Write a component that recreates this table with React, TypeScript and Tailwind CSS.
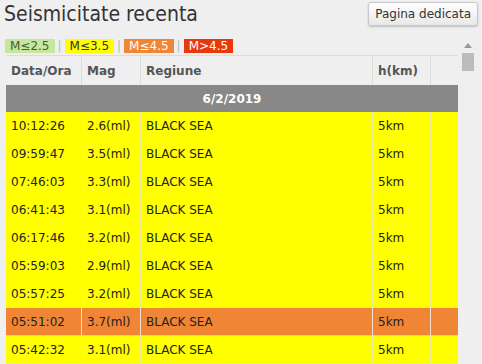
import React from "react";

const rows = [
  { t: "10:12:26", m: "2.6(ml)", c: "y" },
  { t: "09:59:47", m: "3.5(ml)", c: "y" },
  { t: "07:46:03", m: "3.3(ml)", c: "y" },
  { t: "06:41:43", m: "3.1(ml)", c: "y" },
  { t: "06:17:46", m: "3.2(ml)", c: "y" },
  { t: "05:59:03", m: "2.9(ml)", c: "y" },
  { t: "05:57:25", m: "3.2(ml)", c: "y" },
  { t: "05:51:02", m: "3.7(ml)", c: "o" },
  { t: "05:42:32", m: "3.1(ml)", c: "y" },
];

export default function App() {
  return (
    <div
      className="w-[482px] h-[364px] overflow-hidden bg-[#efefef] text-[#222]"
      style={{ fontFamily: '"DejaVu Sans", sans-serif' }}
    >
      <div className="flex items-start justify-between h-[38px]">
        <div
          className="pl-[4px] pt-[1px] text-[21px] leading-[26px] text-[#333]"
          style={{ fontFamily: '"DejaVu Sans Condensed", sans-serif' }}
        >
          Seismicitate recenta
        </div>
        <button className="mt-[2px] mr-[4px] h-[24px] px-[6px] rounded-[3px] border border-[#c8c8c8] bg-gradient-to-b from-white to-[#e8e8e8] text-[12px] text-[#333] shadow-[0_1px_2px_rgba(0,0,0,0.2)]">
          Pagina dedicata
        </button>
      </div>
      <div className="flex">
        <div className="flex flex-col">
          <div className="flex items-center h-[14px] mt-[1px] pl-[5px] text-[12px] leading-[14px]">
            <span className="bg-[#c5e89c] text-[#4a5a3a] px-[5px]">M≤2.5</span>
            <span className="text-[#bbb] px-[3px]">|</span>
            <span className="bg-[#ffff00] text-[#333] px-[5px]">M≤3.5</span>
            <span className="text-[#bbb] px-[3px]">|</span>
            <span className="bg-[#f08536] text-white px-[5px]">M≤4.5</span>
            <span className="text-[#bbb] px-[3px]">|</span>
            <span className="bg-[#e8380d] text-white px-[5px]">M&gt;4.5</span>
          </div>
          <div className="ml-[6px] w-[452px] text-[12px] mt-[2px]">
            <div className="flex h-[30px] items-center border-t border-[#dcdcdc] font-bold text-[#555]">
              <div className="w-[76px] h-full flex items-center pl-[5px] border-r border-[#dcdcdc]">Data/Ora</div>
              <div className="w-[59px] h-full flex items-center pl-[5px] border-r border-[#dcdcdc]">Mag</div>
              <div className="w-[232px] h-full flex items-center pl-[5px] border-r border-[#dcdcdc]">Regiune</div>
              <div className="w-[58px] h-full flex items-center pl-[5px] border-r border-[#dcdcdc]">h(km)</div>
              <div className="flex-1 h-full" />
            </div>
            <div className="h-[27px] bg-[#888888] flex items-center justify-center text-white font-bold">6/2/2019</div>
            {rows.map((r, i) => (
              <div
                key={i}
                className={
                  r.c === "o"
                    ? "flex h-[28px] bg-[#f08536] border-b border-[#f0c8a8]"
                    : "flex h-[28px] bg-[#ffff00] border-b border-[#eaea9a]"
                }
              >
                <div className={(r.c === "o" ? "border-[#f5e0d0]" : "border-[#e8e8a0]") + " w-[76px] flex items-center pl-[5px] border-r"}>{r.t}</div>
                <div className={(r.c === "o" ? "border-[#f5e0d0]" : "border-[#e8e8a0]") + " w-[59px] flex items-center pl-[5px] border-r"}>{r.m}</div>
                <div className={(r.c === "o" ? "border-[#f5e0d0]" : "border-[#e8e8a0]") + " w-[232px] flex items-center pl-[5px] border-r"}>BLACK SEA</div>
                <div className={(r.c === "o" ? "border-[#f5e0d0]" : "border-[#e8e8a0]") + " w-[58px] flex items-center pl-[5px] border-r"}>5km</div>
                <div className="flex-1" />
              </div>
            ))}
          </div>
        </div>
        <div className="w-[20px] flex flex-col items-center pt-[4px]">
          <svg width="10" height="6" viewBox="0 0 10 6">
            <path d="M1 6 L5 1 L9 6 Z" fill="#999" />
          </svg>
          <div className="mt-[5px] w-[12px] h-[18px] bg-[#bcbcbc]" />
        </div>
      </div>
    </div>
  );
}
